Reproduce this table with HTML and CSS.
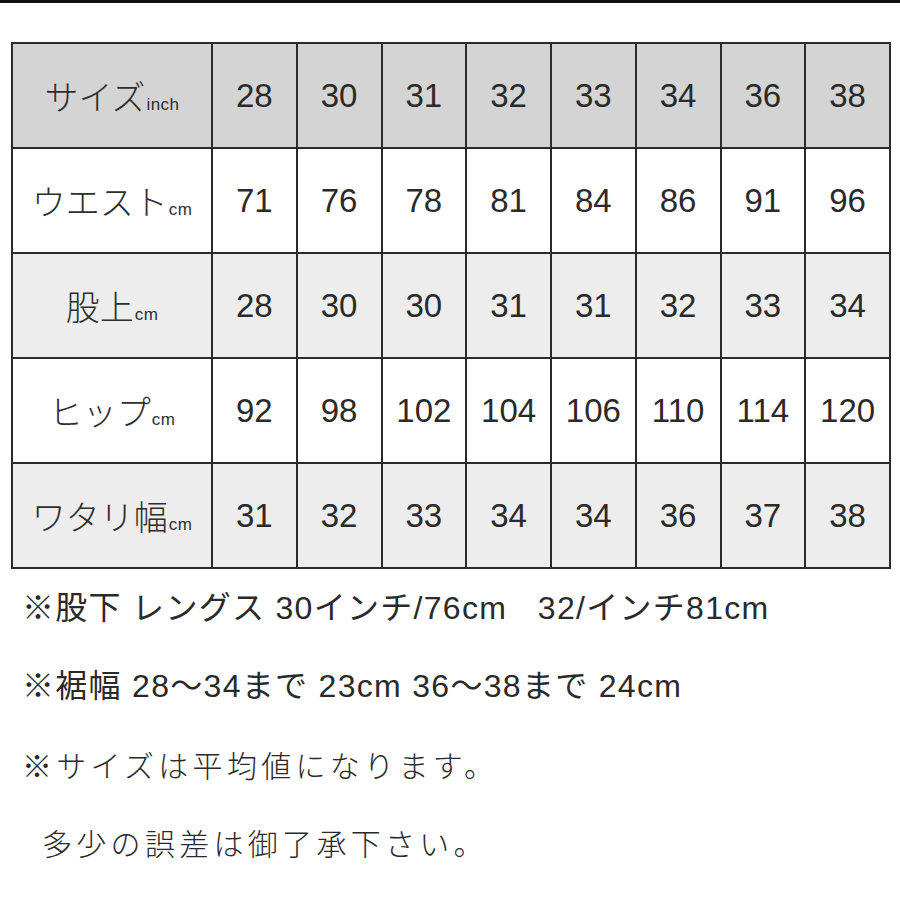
FILE: index.html
```html
<!DOCTYPE html>
<html lang="ja">
<head>
<meta charset="utf-8">
<link rel="stylesheet" href="styles.css">
</head>
<body>
<div class="topbar"></div>
<table class="size">
  <colgroup><col class="c-label"><col><col><col><col><col><col><col><col></colgroup>
  <tr class="r-head">
    <td class="label">サイズ<small>inch</small></td><td>28</td><td>30</td><td>31</td><td>32</td><td>33</td><td>34</td><td>36</td><td>38</td>
  </tr>
  <tr class="r-white">
    <td class="label">ウエスト<small>cm</small></td><td>71</td><td>76</td><td>78</td><td>81</td><td>84</td><td>86</td><td>91</td><td>96</td>
  </tr>
  <tr class="r-light">
    <td class="label">股上<small>cm</small></td><td>28</td><td>30</td><td>30</td><td>31</td><td>31</td><td>32</td><td>33</td><td>34</td>
  </tr>
  <tr class="r-white">
    <td class="label">ヒップ<small>cm</small></td><td>92</td><td>98</td><td>102</td><td>104</td><td>106</td><td>110</td><td>114</td><td>120</td>
  </tr>
  <tr class="r-light">
    <td class="label">ワタリ幅<small>cm</small></td><td>31</td><td>32</td><td>33</td><td>34</td><td>34</td><td>36</td><td>37</td><td>38</td>
  </tr>
</table>
<div class="notes">
  <p class="note">※股下 レングス 30インチ/76cm&nbsp;&nbsp;&nbsp;32/インチ81cm</p>
  <p class="note">※裾幅 28～34まで 23cm 36～38まで 24cm</p>
  <p class="note wide">※サイズは平均値になります。</p>
  <p class="note wide indent">多少の誤差は御了承下さい。</p>
</div>
</body>
</html>
```
FILE: styles.css
```css
html, body {
  margin: 0;
  padding: 0;
  background: #ffffff;
}
body {
  width: 900px;
  height: 900px;
  overflow: hidden;
  font-family: "Liberation Sans", "Noto Sans CJK JP", sans-serif;
  color: #2a2a2a;
}
.topbar {
  height: 3px;
  background: #111111;
}
.size {
  margin: 39px 0 0 11px;
  width: 880px;
  border-collapse: collapse;
  table-layout: fixed;
}
.c-label {
  width: 200px;
}
.size td {
  border: 2px solid #2b2b2b;
  height: 103px;
  padding: 0;
  text-align: center;
  vertical-align: middle;
  font-size: 33px;
  line-height: 1;
}
.size td.label {
  font-family: "Noto Sans CJK JP", sans-serif;
  font-size: 34px;
  font-weight: 300;
  color: #2e2e2e;
}
.size td.label small {
  font-family: "Liberation Sans", sans-serif;
  font-size: 17px;
  font-weight: 400;
  letter-spacing: 0.5px;
  margin-left: 1px;
}
.r-head td {
  background: #d4d4d4;
}
.r-white td {
  background: #ffffff;
}
.r-light td {
  background: #ededed;
}
.notes {
  padding-left: 22px;
}
.note {
  margin: 0;
  height: 78px;
  line-height: 78px;
  font-size: 32px;
  white-space: nowrap;
  letter-spacing: 1.3px;
}
.note.wide {
  font-family: "Noto Sans CJK JP", sans-serif;
  font-size: 30px;
  font-weight: 300;
  letter-spacing: 4.3px;
}
.note.indent {
  padding-left: 20px;
}
```
